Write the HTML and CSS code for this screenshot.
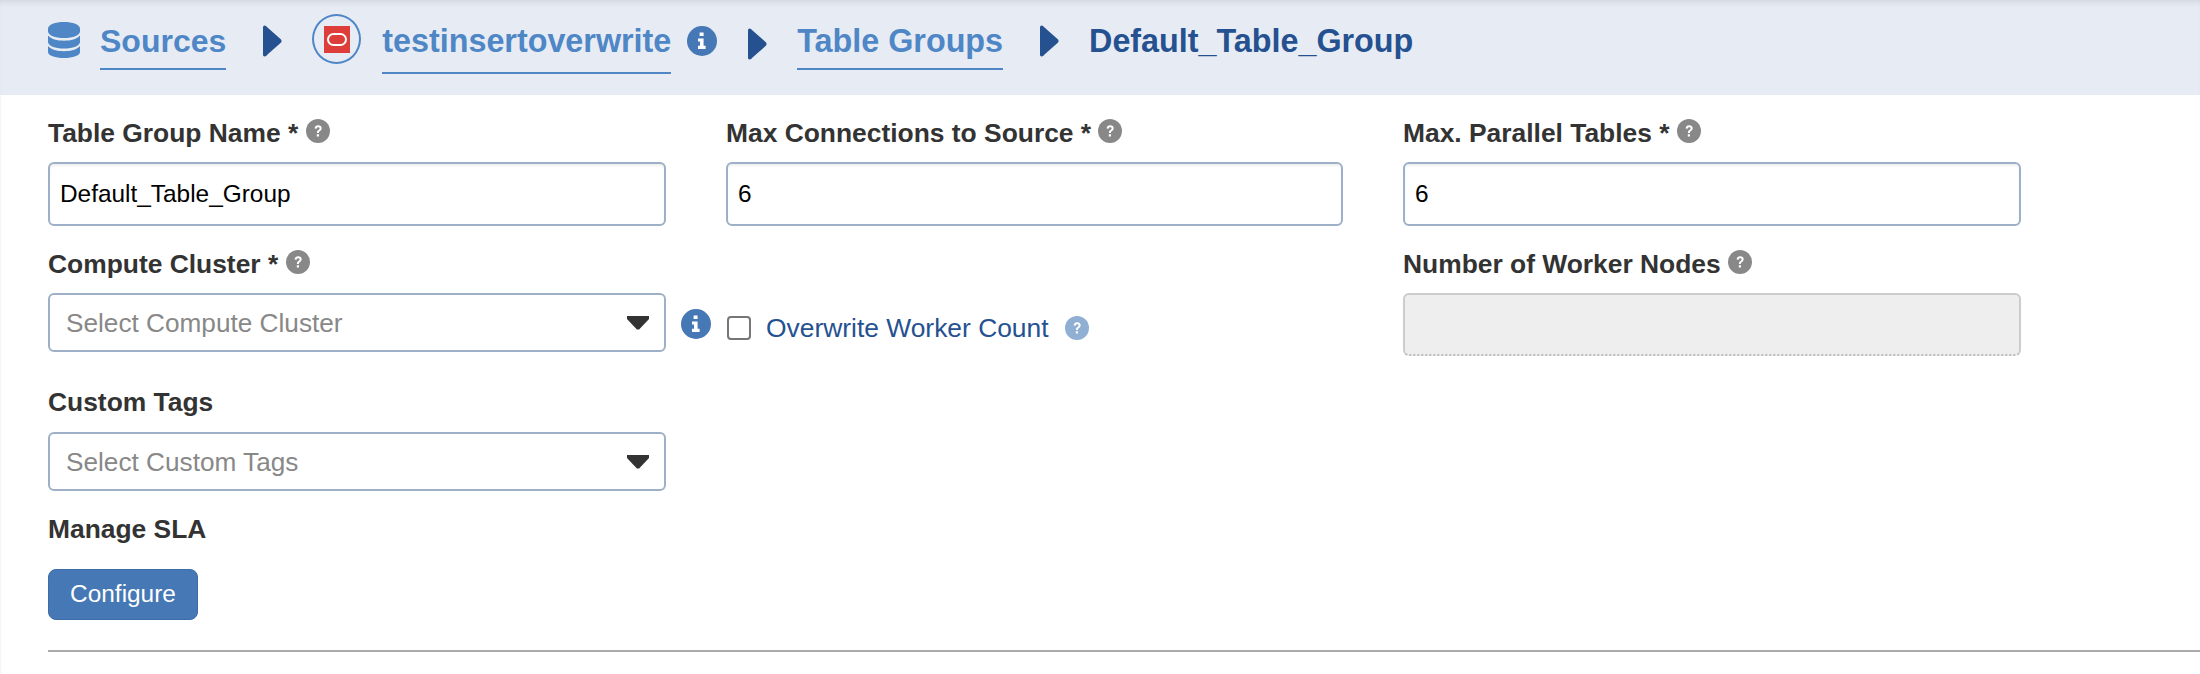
FILE: index.html
```html
<!DOCTYPE html>
<html lang="en">
<head>
<meta charset="utf-8">
<title>Default_Table_Group</title>
<link rel="stylesheet" href="styles.css">
</head>
<body>
<svg class="sprites" width="0" height="0" aria-hidden="true">
  <symbol id="arrow" viewBox="0 0 19 32"><path d="M1.5 0.5C3 0.5 3.5 1.5 4.5 2.5L17.8 14.2C18.8 15.3 18.8 16.7 17.8 17.8L4.5 29.5C3.5 30.5 3 31.5 1.5 31.5C0.5 31.5 0 30.5 0 29.5V2.5C0 1.5 0.5 0.5 1.5 0.5Z" fill="#255190"/></symbol>
  <symbol id="help" viewBox="0 0 24 24"><circle cx="12" cy="12" r="12" fill="currentColor"/><path d="M8.6 9.6C8.7 7.5 10.2 6.3 12.2 6.3C14.2 6.3 15.7 7.5 15.7 9.3C15.7 10.6 15 11.3 14 12C13.2 12.6 12.9 13 12.9 14H10.9C10.9 12.6 11.3 11.8 12.4 11C13.2 10.4 13.6 10.1 13.6 9.4C13.6 8.7 13 8.2 12.2 8.2C11.3 8.2 10.7 8.8 10.6 9.8Z M10.8 15.2H13V17.5H10.8Z" fill="#fff"/></symbol>
  <symbol id="info" viewBox="0 0 30 30"><circle cx="15" cy="15" r="15" fill="#4578b4"/><path d="M12.6 6.5H16.6V10H12.6Z M11 12.5H16.6V19.8H18.6V23H11V19.8H13V15.6H11Z" fill="#fff"/></symbol>
</svg>

<header class="crumbs">
  <svg class="db-icon" viewBox="0 0 32 36" aria-hidden="true">
    <path d="M16 0C24.8 0 32 2.7 32 6.5V9.5C32 13.3 24.8 16 16 16C7.2 16 0 13.3 0 9.5V6.5C0 2.7 7.2 0 16 0Z" fill="#4f86c6"/>
    <path d="M0 13.5C3 17 9 18.7 16 18.7C23 18.7 29 17 32 13.5V20C32 23.8 24.8 26.5 16 26.5C7.2 26.5 0 23.8 0 20Z" fill="#4f86c6"/>
    <path d="M0 24C3 27.5 9 29.2 16 29.2C23 29.2 29 27.5 32 24V30C32 33.6 24.8 36 16 36C7.2 36 0 33.6 0 30Z" fill="#4f86c6"/>
  </svg>
  <a class="crumb crumb-sources">Sources</a>
  <svg class="arrow arrow-one"><use href="#arrow"/></svg>
  <span class="logo-ring">
    <svg class="logo" viewBox="0 0 26 27" aria-hidden="true">
      <rect width="26" height="27" fill="#dd3e3a"/>
      <rect x="4" y="8" width="18" height="11" rx="5.5" fill="none" stroke="#fff" stroke-width="2"/>
    </svg>
  </span>
  <a class="crumb crumb-source">testinsertoverwrite</a>
  <svg class="info info-head"><use href="#info"/></svg>
  <svg class="arrow arrow-two"><use href="#arrow"/></svg>
  <a class="crumb crumb-groups">Table Groups</a>
  <svg class="arrow arrow-three"><use href="#arrow"/></svg>
  <span class="crumb-current">Default_Table_Group</span>
</header>

<main class="page">
  <form class="form">
    <div class="field">
      <label class="label">Table Group Name * <svg class="help"><use href="#help"/></svg></label>
      <input class="input" type="text" value="Default_Table_Group">
    </div>
    <div class="field">
      <label class="label">Max Connections to Source * <svg class="help"><use href="#help"/></svg></label>
      <input class="input" type="text" value="6">
    </div>
    <div class="field">
      <label class="label">Max. Parallel Tables * <svg class="help"><use href="#help"/></svg></label>
      <input class="input" type="text" value="6">
    </div>

    <div class="field field-select">
      <label class="label">Compute Cluster * <svg class="help"><use href="#help"/></svg></label>
      <div class="select"><span>Select Compute Cluster</span><i class="caret"></i></div>
      <svg class="info info-select"><use href="#info"/></svg>
    </div>
    <div class="check-row">
      <input class="check" type="checkbox" id="overwrite">
      <label class="check-label" for="overwrite">Overwrite Worker Count</label>
      <svg class="help help-light"><use href="#help"/></svg>
    </div>
    <div class="field">
      <label class="label">Number of Worker Nodes <svg class="help"><use href="#help"/></svg></label>
      <div class="input input-disabled"></div>
    </div>

    <div class="field field-tags">
      <label class="label">Custom Tags</label>
      <div class="select"><span>Select Custom Tags</span><i class="caret"></i></div>
    </div>
  </form>

  <div class="sla">
    <div class="label">Manage SLA</div>
    <button class="btn" type="button">Configure</button>
  </div>
  <hr class="rule">
</main>
</body>
</html>
```

FILE: styles.css
```css
* { box-sizing: border-box; }
html, body { margin: 0; padding: 0; }
body {
  width: 2200px;
  height: 674px;
  overflow: hidden;
  background: #fff;
  font-family: "Liberation Sans", Arial, sans-serif;
  color: #333;
}
.sprites { position: absolute; }

/* breadcrumb bar */
.crumbs {
  display: flex;
  align-items: flex-start;
  height: 95px;
  padding-left: 48px;
  background: #e7ecf4;
  box-shadow: inset 0 6px 6px -4px rgba(0, 0, 0, .1);
}
.db-icon { width: 32px; height: 36px; margin-top: 22px; flex: none; }
.crumb {
  display: block;
  color: #4f86c6;
  font-size: 32.3px;
  font-weight: 700;
  line-height: 37px;
  border-bottom: 2px solid #4f86c6;
  white-space: nowrap;
}
.crumb-sources { margin: 23px 0 0 20px; padding-bottom: 8px; font-size: 32px; }
.arrow { width: 19px; height: 32px; flex: none; }
.arrow-one { margin: 25px 0 0 37px; }
.logo-ring {
  display: flex;
  align-items: center;
  justify-content: center;
  width: 49px;
  height: 50px;
  margin: 14px 0 0 30px;
  border: 2px solid #4f86c6;
  border-radius: 50%;
  flex: none;
}
.logo { width: 26px; height: 27px; }
.crumb-source { margin: 23px 0 0 21px; padding-bottom: 12px; }
.info { width: 30px; height: 30px; flex: none; }
.info-head { margin: 26px 0 0 16px; }
.arrow-two { margin: 28px 0 0 31px; }
.crumb-groups { margin: 23px 0 0 30px; padding-bottom: 8px; }
.arrow-three { margin: 25px 0 0 37px; }
.crumb-current {
  margin: 23px 0 0 30px;
  color: #255190;
  font-size: 32.3px;
  font-weight: 700;
  line-height: 37px;
  white-space: nowrap;
}

/* form */
.page {
  padding: 23px 0 0 48px;
  height: 579px;
  box-shadow: inset 2px 0 2px -1px rgba(0, 0, 0, .05);
}
.form {
  display: grid;
  grid-template-columns: 618px 617px 618px;
  column-gap: 60px;
  row-gap: 23px;
  align-items: start;
}
.field { position: relative; }
.field-tags { margin-top: 8px; }
.label {
  display: flex;
  align-items: center;
  height: 30px;
  margin-bottom: 14px;
  font-size: 26.4px;
  font-weight: 700;
  line-height: 30px;
  color: #333;
  white-space: pre;
}
.field-tags .label { margin-bottom: 15px; }
.help { width: 24px; height: 24px; margin-bottom: 4px; color: #888; flex: none; }
.help-light { color: #8fafd3; margin: 0 0 0 16px; }

.input {
  display: block;
  width: 100%;
  height: 64px;
  padding: 0 10px;
  background: #fff;
  border: 2px solid #9db0c8;
  border-radius: 6px;
  box-shadow: inset 0 2px 2px rgba(0, 0, 0, .06);
  font: 24.4px "Liberation Sans", Arial, sans-serif;
  color: #000;
  outline: none;
}
.input-disabled {
  height: 63px;
  background: #eee;
  border-color: #ccc;
  border-bottom: 2px dotted #bbb;
  box-shadow: none;
}

.select {
  display: flex;
  align-items: center;
  justify-content: space-between;
  height: 59px;
  padding: 2px 15px 0 16px;
  background: #fff;
  border: 2px solid #9db0c8;
  border-radius: 6px;
  font-size: 26.2px;
  color: #888;
}
.caret {
  width: 22px;
  height: 14px;
  margin-top: -2px;
  background: #333;
  clip-path: polygon(0 0, 100% 0, 100% 25%, 55% 100%, 45% 100%, 0 25%);
}
.info-select { position: absolute; left: 633px; top: 60px; }

.check-row {
  display: flex;
  align-items: center;
  height: 24px;
  margin-top: 67px;
}
.check {
  appearance: none;
  width: 24px;
  height: 24px;
  margin: 0 15px 0 1px;
  background: #fff;
  border: 2px solid #767676;
  border-radius: 4px;
  flex: none;
}
.check-label { font-size: 26.4px; color: #255190; line-height: 28px; white-space: nowrap; }

/* SLA */
.sla {
  display: flex;
  flex-direction: column;
  align-items: flex-start;
  margin-top: 23px;
}
.sla .label { margin-bottom: 25px; }
.btn {
  width: 150px;
  height: 51px;
  padding: 0 0 2px;
  background: #4578b4;
  border: 1px solid #3d6ca6;
  border-radius: 8px;
  color: #fff;
  font: 24.4px "Liberation Sans", Arial, sans-serif;
}
.rule {
  margin: 30px 0 0;
  height: 2px;
  border: 0;
  background: #aaa;
}
```
